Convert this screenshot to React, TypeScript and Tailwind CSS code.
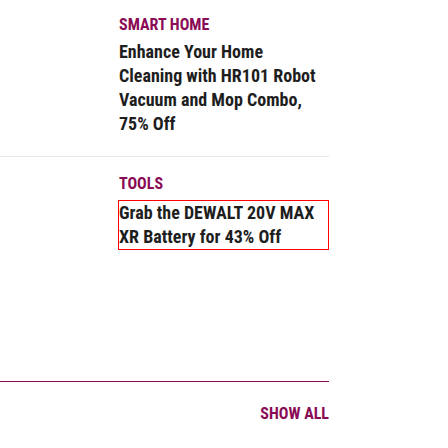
import React from "react";

interface Deal {
	category: string;
	title: string;
	focused?: boolean;
}

const deals: Deal[] = [
	{
		category: "SMART HOME",
		title: "Enhance Your Home Cleaning with HR101 Robot Vacuum and Mop Combo, 75% Off",
	},
	{
		category: "TOOLS",
		title: "Grab the DEWALT 20V MAX XR Battery for 43% Off",
		focused: true,
	},
];

const font = {
	fontFamily: '"Liberation Sans Narrow", "Roboto Condensed", Roboto, sans-serif',
};

const App: React.FC = () => {
	return (
		<div className="min-h-[448px] w-[448px] bg-white" style={font}>
			<div className="w-[329px]">
				<div className="border-b border-[#e6e6e6] pb-5 pl-[119px] pt-[15px]">
					<div className="text-[16px] font-bold leading-5 text-[#8a0b55]">
						{deals[0].category}
					</div>
					<a className="mt-[5px] block text-[18px] font-bold leading-6 text-[#1e1e1e]">
						{deals[0].title}
					</a>
				</div>
				<div className="pl-[119px] pt-[17px]">
					<div className="text-[16px] font-bold leading-5 text-[#8a0b55]">
						{deals[1].category}
					</div>
					<a className="-ml-px mt-[6px] block border border-solid border-[#ff0000] text-[18px] font-bold leading-6 text-[#1e1e1e]">
						{deals[1].title}
					</a>
				</div>
				<div className="mt-[131px] border-t border-[#8a0b55]"></div>
				<div className="flex justify-end pt-[22px]">
					<a className="text-[16px] font-bold leading-5 text-[#8a0b55]">SHOW ALL</a>
				</div>
			</div>
		</div>
	);
};

export default App;
